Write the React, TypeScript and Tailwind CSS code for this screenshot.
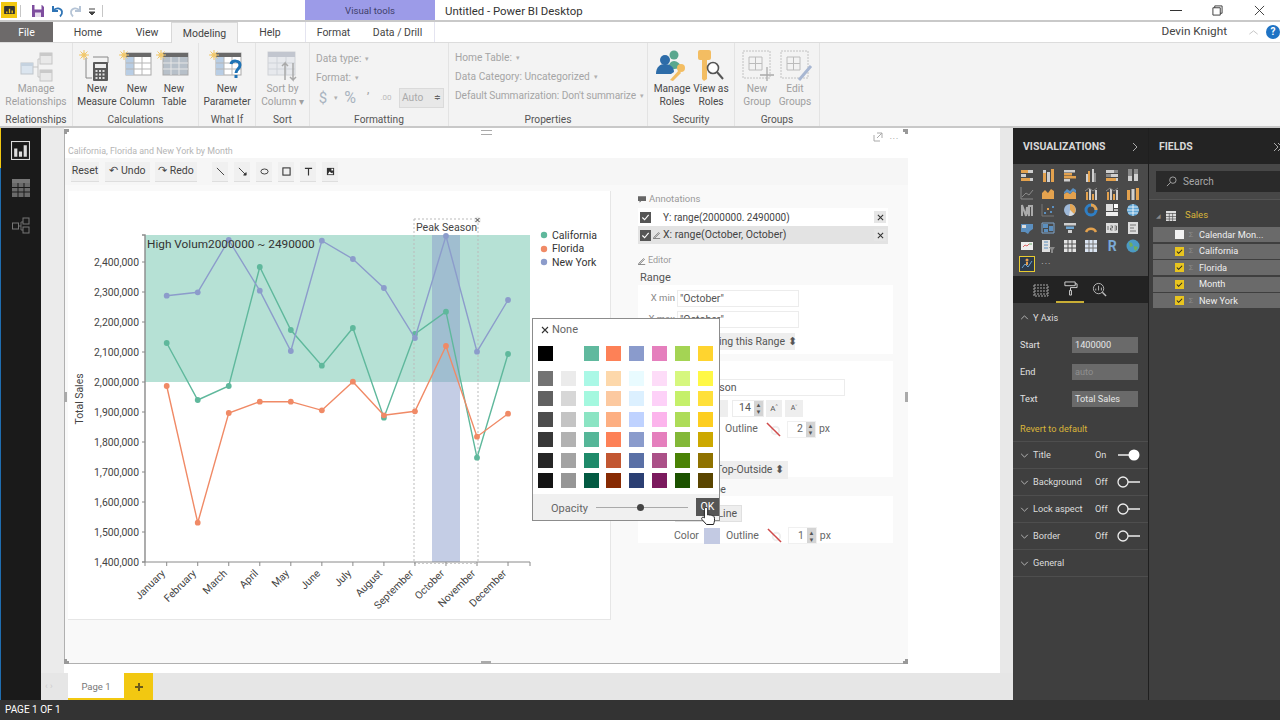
import React from "react";

const F = "font-['Roboto','Noto_Sans',sans-serif]";
const SF = "Roboto,'Noto Sans',sans-serif";

const months = ["January","February","March","April","May","June","July","August","September","October","November","December"];
const mx = (i: number) => 166.7 + i * 31.03;
const ny = [295.7,292.3,240,290.7,351,240.7,259,288,338,236,351.7,300];
const ca = [343,400,386,267,330,365.7,328,417.7,334,311.7,457.7,354];
const fl = [386,522.7,413,401.7,401.7,410.3,381.7,415.3,411.3,346,436.7,413.7];

function Series({ d, c }: { d: number[]; c: string }) {
  return (
    <g>
      <polyline points={d.map((y, i) => `${mx(i)},${y}`).join(" ")} fill="none" stroke={c} strokeWidth="1.4" />
      {d.map((y, i) => <circle key={i} cx={mx(i)} cy={y} r="2.9" fill={c} />)}
    </g>
  );
}

function Chart() {
  const ticks = [];
  for (let i = 0; i <= 10; i++) {
    const v = 1400000 + i * 100000;
    ticks.push({ y: 562 - i * 30, t: v.toLocaleString("en-US") });
  }
  return (
    <svg viewBox="68 191 543 429" className="w-[543px] h-[429px] block">
      <rect x="145" y="235" width="385" height="147" fill="#b6e1d5" />
      <rect x="432" y="235" width="28" height="327" fill="#8a9bcc" fillOpacity="0.5" />
      <line x1="414" y1="219" x2="414" y2="562" stroke="#bbb" strokeDasharray="2 2" />
      <line x1="478" y1="219" x2="478" y2="562" stroke="#bbb" strokeDasharray="2 2" />
      <path d="M414 219H478" stroke="#bbb" strokeDasharray="2 2" />
      <path d="M414 563.5H478" stroke="#ccc" strokeDasharray="2 2" />
      <g stroke="#8a8a8a" strokeWidth="1">
        <path d="M142 235H145V562" fill="none" strokeWidth="1.4" />
        {ticks.map((t) => <line key={t.y} x1="142" x2="145" y1={t.y} y2={t.y} />)}
        <line x1="142" y1="562" x2="530" y2="562" />
        <line x1="530" y1="562" x2="530" y2="566" />
        <line x1="145" y1="562" x2="145" y2="566" />
        {months.map((m, i) => <line key={m} x1={mx(i)} x2={mx(i)} y1="562" y2="566" />)}
      </g>
      <g fontFamily={SF} fontSize="10.4" fill="#444">
        {ticks.map((t) => <text key={t.y} x="139" y={t.y + 3.8} textAnchor="end">{t.t}</text>)}
        {months.map((m, i) => (
          <text key={m} x={mx(i) - 1} y="574" textAnchor="end" transform={`rotate(-45 ${mx(i) - 1} 574)`}>{m}</text>
        ))}
        <text x="0" y="0" textAnchor="middle" transform="translate(83 399) rotate(-90)">Total Sales</text>
      </g>
      <Series d={ca} c="#5fb89c" />
      <Series d={fl} c="#f08a66" />
      <Series d={ny} c="#8c9ccb" />
      <text x="147" y="247.500" fontFamily={SF} fontSize="11.8" fill="#333">High Volum2000000 ~ 2490000</text>
      <text x="416" y="231" fontFamily={SF} fontSize="10.6" fill="#444">Peak Season</text>
      <circle cx="477.5" cy="220" r="3.5" fill="#eee" />
      <path d="M475.5 218l4 4M479.5 218l-4 4" stroke="#444" strokeWidth="1" />
      <g fontFamily={SF} fontSize="10.5" fill="#333">
        <circle cx="544" cy="235" r="3.2" fill="#5fb89c" /><text x="552" y="239">California</text>
        <circle cx="544" cy="249" r="3.2" fill="#f08a66" /><text x="552" y="252">Florida</text>
        <circle cx="544" cy="262" r="3.2" fill="#8c9ccb" /><text x="552" y="266">New York</text>
      </g>
    </svg>
  );
}

/* ---------- ribbon icons ---------- */
const Sun = () => (
  <g>
    <circle cx="5" cy="5" r="2.6" fill="#f4d38a" />
    <path d="M5 0v10M0 5h10M1.5 1.5l7 7M8.5 1.5l-7 7" stroke="#f0c76b" strokeWidth="1" />
  </g>
);
const TableIco = ({ dim = false }: { dim?: boolean }) => (
  <g>
    <rect x="7" y="3" width="25" height="22" fill={dim ? "#b7c0c9" : "#fff"} stroke="#a9a9a9" />
    <rect x="7" y="3" width="25" height="4" fill="#6a6a6a" />
    {!dim && <rect x="7" y="7" width="8" height="18" fill="#b8cde4" />}
    <path d="M15 7v18M23 7v18M7 13h25M7 19h25" stroke={dim ? "#e6e6e6" : "#b5b5b5"} />
  </g>
);
function RIcon({ k }: { k: string }) {
  const c = "w-[36px] h-[32px]";
  if (k === "rel")
    return (
      <svg viewBox="0 0 36 32" className={c}>
        <path d="M15 17h5M20 9v18M20 9h4M20 27h4" stroke="#c5c5c5" fill="none" />
        <rect x="3" y="13" width="12" height="11" fill="#dbe5ef" stroke="#bfc5cb" />
        <rect x="22" y="3" width="12" height="11" fill="#e9e9e9" stroke="#c5c5c5" />
        <rect x="22" y="20" width="12" height="11" fill="#e9e9e9" stroke="#c5c5c5" />
        <rect x="3" y="13" width="12" height="3" fill="#c5d2df" />
        <rect x="22" y="3" width="12" height="3" fill="#c9c9c9" />
        <rect x="22" y="20" width="12" height="3" fill="#c9c9c9" />
      </svg>
    );
  if (k === "measure")
    return (
      <svg viewBox="0 0 36 32" className={c}>
        <path d="M7 8v20h6M14 7h15v6" stroke="#888" fill="none" />
        <rect x="14" y="12" width="15" height="19" rx="1" fill="#5a5a5a" />
        <rect x="16" y="14" width="11" height="4" fill="#eee" />
        <path d="M16.5 21h10M16.5 24.5h10M16.5 28h10" stroke="#ddd" strokeDasharray="2 1.5" strokeWidth="2" />
        <Sun />
      </svg>
    );
  if (k === "column")
    return <svg viewBox="0 0 36 32" className={c}><TableIco /><Sun /></svg>;
  if (k === "table")
    return <svg viewBox="0 0 36 32" className={c}><TableIco dim /><Sun /></svg>;
  if (k === "param")
    return (
      <svg viewBox="0 0 36 32" className={c}>
        <TableIco />
        <Sun />
        <path d="M22 14c1-4 9-4 9 1 0 4-4 4-4 8M27 25v3" fill="none" stroke="#1f73b5" strokeWidth="3" />
      </svg>
    );
  if (k === "sort")
    return (
      <svg viewBox="0 0 36 32" className={c}>
        <rect x="3" y="2" width="27" height="23" fill="#e7e9ed" stroke="#cfd2d6" />
        <rect x="3" y="2" width="27" height="5" fill="#c2c6cf" />
        <path d="M3 13h27M3 19h27M12 7v18M21 7v18" stroke="#cfd3d9" />
        <path d="M20 30V13l-3 3M20 13l3 3M28 13v17l-3-3M28 30l3-3" stroke="#a9a9a9" strokeWidth="1.5" fill="none" />
      </svg>
    );
  if (k === "roles")
    return (
      <svg viewBox="0 0 36 32" className={c}>
        <circle cx="20" cy="5" r="4.5" fill="#5aa78e" />
        <path d="M14 20c0-6 3-9 6-9s7 3 7 7z" fill="#5aa78e" />
        <circle cx="11" cy="10" r="5" fill="#2d6ca8" />
        <path d="M2 24c0-7 4-10 9-10s9 3 9 8l-3 2z" fill="#2d6ca8" />
        <circle cx="27" cy="18" r="4" fill="#f3bd62" />
        <path d="M25 20l-9 10 3 1 8-8" fill="#f3bd62" />
      </svg>
    );
  if (k === "view")
    return (
      <svg viewBox="0 0 36 32" className={c}>
        <rect x="5" y="0" width="13" height="10" rx="2" fill="#f3bd62" />
        <path d="M9 9h5v20l-3 2-2-2z" fill="#f3bd62" />
        <circle cx="20" cy="18" r="5.5" fill="#fff" stroke="#555" strokeWidth="1.6" />
        <path d="M24 22l6 7" stroke="#555" strokeWidth="2" />
      </svg>
    );
  if (k === "group")
    return (
      <svg viewBox="0 0 36 32" className={c}>
        <rect x="4" y="1" width="27" height="27" fill="none" stroke="#c2c2c2" strokeDasharray="2 1" />
        <path d="M10 7h13v13H10zM10 13.5h13M16.5 7v13" fill="none" stroke="#bcbcbc" />
        <path d="M28 17v14M21 25h14" stroke="#aaa" strokeWidth="1.3" />
      </svg>
    );
  return (
    <svg viewBox="0 0 36 32" className={c}>
      <rect x="4" y="1" width="27" height="27" fill="none" stroke="#c2c2c2" strokeDasharray="2 1" />
      <path d="M10 7h13v13H10zM10 13.5h13M16.5 7v13" fill="none" stroke="#bcbcbc" />
      <path d="M22 30l12-14" stroke="#a8b7d2" strokeWidth="3" />
    </svg>
  );
}

function RBtn({ k, a, b, w, dim }: { k: string; a: string; b: string; w: string; dim?: boolean }) {
  return (
    <div className={`${w} flex flex-col items-center text-[10.2px] leading-[13px] ${dim ? "text-[#a0a0a0]" : "text-[#4a4a4a]"}`}>
      <div className="h-[33px] mt-[6px] flex items-center justify-center w-[36px]"><RIcon k={k} /></div>
      <span className="whitespace-nowrap">{a}</span>
      <span className="whitespace-nowrap">{b}</span>
    </div>
  );
}

function RGroup({ w, label, children, pad = "justify-center" }: { w: string; label: string; children: React.ReactNode; pad?: string }) {
  return (
    <div className={`${w} h-full flex flex-col border-r border-[#e3e3e3]`}>
      <div className={`h-[65px] flex ${pad}`}>{children}</div>
      <div className="h-[18px] text-center text-[10.2px] leading-[24px] text-[#555]">{label}</div>
    </div>
  );
}

const Caret = () => <span className="text-[7px] text-[#b0b0b0] ml-[4px] align-top">▾</span>;

function Ribbon() {
  return (
    <div className="h-[85px] flex bg-[#f3f3f3] border-b-[2px] border-[#c8c8c8] shrink-0">
      <RGroup w="w-[73px]" label="Relationships"><RBtn k="rel" a="Manage" b="Relationships" w="w-[70px]" dim /></RGroup>
      <RGroup w="w-[126px]" label="Calculations" pad="justify-start pl-[2px]">
        <RBtn k="measure" a="New" b="Measure" w="w-[44px]" />
        <RBtn k="column" a="New" b="Column" w="w-[36px]" />
        <RBtn k="table" a="New" b="Table" w="w-[38px]" />
      </RGroup>
      <RGroup w="w-[57px]" label="What If"><RBtn k="param" a="New" b="Parameter" w="w-[56px]" /></RGroup>
      <RGroup w="w-[54px]" label="Sort"><RBtn k="sort" a="Sort by" b="Column ▾" w="w-[52px]" dim /></RGroup>
      <RGroup w="w-[139px]" label="Formatting" pad="justify-start">
        <div className="pl-[6px] pt-[9px] text-[10.2px] text-[#a5a5a5] leading-[14px]">
          <div>Data type:<Caret /></div>
          <div className="mt-[5px]">Format:<Caret /></div>
          <div className="mt-[2px] h-[22px] flex items-center">
            <span className="w-[14px] text-center text-[15px] text-[#a9b4c0]">$</span>
            <span className="w-[10px]"><Caret /></span>
            <span className="w-[20px] text-center text-[16px] text-[#a9b4c0]">%</span>
            <span className="w-[16px] text-center text-[13px]">’</span>
            <span className="w-[20px] text-center text-[8px] text-[#bbb]">.00</span>
            <div className="ml-[3px] w-[45px] h-[20px] bg-[#e8e8e8] border border-[#dadada] flex items-center justify-between px-[2px] text-[#aaa]">
              Auto <span className="text-[8px] leading-[8px] text-[#666]">≑</span>
            </div>
          </div>
        </div>
      </RGroup>
      <RGroup w="w-[199px]" label="Properties" pad="justify-start">
        <div className="pl-[6px] pt-[8px] text-[10.2px] text-[#a5a5a5] leading-[14px] whitespace-nowrap">
          <div>Home Table:<Caret /></div>
          <div className="mt-[5px]">Data Category: Uncategorized<Caret /></div>
          <div className="mt-[5px] tracking-[-0.1px]">Default Summarization: Don't summarize<Caret /></div>
        </div>
      </RGroup>
      <RGroup w="w-[87px]" label="Security">
        <RBtn k="roles" a="Manage" b="Roles" w="w-[40px]" />
        <RBtn k="view" a="View as" b="Roles" w="w-[38px]" />
      </RGroup>
      <RGroup w="w-[85px]" label="Groups" pad="justify-start pl-[3px]">
        <RBtn k="group" a="New" b="Group" w="w-[38px]" dim />
        <RBtn k="edit" a="Edit" b="Groups" w="w-[38px]" dim />
      </RGroup>
    </div>
  );
}

function TitleBar() {
  return (
    <div className="h-[22px] flex items-stretch bg-white border-b-[2px] border-[#c9c9c9] shrink-0 relative">
      <div className="w-[16px] h-[16px] mt-[2px] ml-[1px] bg-[#f2c811] flex items-center justify-center">
        <svg viewBox="0 0 12 10" className="w-[11px] h-[9px]"><rect width="12" height="9" rx="1" fill="#333" /><path d="M3 8V6M6 8V3M9 8V5" stroke="#f2c811" strokeWidth="1.5" /></svg>
      </div>
      <div className="w-px h-[12px] bg-[#c6c6c6] mt-[5px] ml-[3px]" />
      <div className="ml-[10px] mt-[4px] flex items-start gap-[5px]">
        <svg viewBox="0 0 14 14" className="w-[14px] h-[14px]"><path d="M1 1h10l2 2v10H1z" fill="#7e4d9e" /><rect x="3.5" y="1" width="7" height="4.5" fill="#fff" /><rect x="4" y="8.5" width="6" height="4.5" fill="#e6dcec" /></svg>
        <svg viewBox="0 0 14 14" className="w-[14px] h-[14px]"><path d="M3 2v5h5" fill="none" stroke="#2f74b5" strokeWidth="2" /><path d="M3.5 6.5C6 3 11 4 12 7.5c.5 2-.5 3.5-2 5" fill="none" stroke="#2f74b5" strokeWidth="1.8" /></svg>
        <svg viewBox="0 0 14 14" className="w-[14px] h-[14px]"><path d="M11 2v5H6" fill="none" stroke="#b5c4d6" strokeWidth="2" /><path d="M10.5 6.5C8 3 3 4 2 7.5c-.5 2 .5 3.5 2 5" fill="none" stroke="#b5c4d6" strokeWidth="1.8" /></svg>
        <svg viewBox="0 0 8 10" className="w-[8px] h-[10px] mt-[3px]"><path d="M1 2h6M1 5l3 3 3-3z" stroke="#444" fill="#444" /></svg>
      </div>
      <div className="w-px h-[12px] bg-[#c6c6c6] mt-[5px] ml-[6px]" />
      <div className="ml-[202px] w-[130px] h-[20px] bg-[#9c9be8] text-[9.6px] leading-[21px] text-center text-[#3f3f6a]">Visual tools</div>
      <div className="ml-[10px] text-[11.4px] leading-[22px] text-[#333]">Untitled - Power BI Desktop</div>
      <div className="ml-auto flex items-center">
        <div className="w-[12px] h-px bg-[#333] mr-[30px]" />
        <svg viewBox="0 0 12 12" className="w-[11px] h-[11px] mr-[31px]"><path d="M3 3V1h8v8H9M1 3h8v8H1z" fill="none" stroke="#333" /></svg>
        <svg viewBox="0 0 12 12" className="w-[11px] h-[11px] mr-[15px]"><path d="M1 1l10 10M11 1L1 11" stroke="#333" /></svg>
      </div>
    </div>
  );
}

function Tabs() {
  const tab = "text-[10.5px] leading-[21px] text-[#444] text-center";
  return (
    <div className="h-[21px] flex bg-white border-b border-[#dcdcdc] shrink-0 items-stretch">
      <div className="w-[53px] bg-[#6d6a6a] text-white text-center text-[10.5px] leading-[21px]">File</div>
      <div className={`${tab} w-[70px]`}>Home</div>
      <div className={`${tab} w-[48px]`}>View</div>
      <div className={`${tab} w-[67px] bg-[#f3f3f3] border-x border-t border-[#d8d8d8] h-[22px]`}>Modeling</div>
      <div className={`${tab} w-[64px]`}>Help</div>
      <div className="w-[3px]" />
      <div className="w-[130px] flex border-x border-[#e4e4f0]">
        <div className={`${tab} w-[55px]`}>Format</div>
        <div className={`${tab} flex-1`}>Data / Drill</div>
      </div>
      <div className="ml-auto flex items-center">
        <span className="text-[11.8px] text-[#444]">Devin Knight</span>
        <svg viewBox="0 0 10 6" className="w-[9px] h-[5px] ml-[22px]"><path d="M0 5l5-4 5 4" fill="none" stroke="#bbb" /></svg>
        <div className="ml-[8px] w-[14px] h-[14px] rounded-full bg-[#1f73c4] text-white text-[10px] leading-[14px] font-bold text-center">?</div>
      </div>
    </div>
  );
}

function LeftNav() {
  return (
    <div className="w-[41px] bg-[#1a1a1a] flex shrink-0 relative">
      <div className="w-[1px] flex flex-col h-full">
        <div className="h-[40px] bg-[#f2c811]" />
        <div className="flex-1 bg-[#1f6db0]" />
      </div>
      <div className="flex-1 flex flex-col items-center pt-[13px] gap-[19px] pr-[1px]">
        <svg viewBox="0 0 18 18" className="w-[19px] h-[19px]"><rect x=".5" y=".5" width="17" height="17" fill="none" stroke="#ddd" /><path d="M3 15V7h3v8zM7.5 15v-5h3v5zM12 15V4h3v11z" fill="#ddd" /></svg>
        <svg viewBox="0 0 18 18" className="w-[18px] h-[18px]"><rect width="18" height="18" fill="#6a6a6a" /><rect width="18" height="4" fill="#777" /><path d="M0 8.500h18M0 13h18M6 4v14M12 4v14" stroke="#1a1a1a" /></svg>
        <svg viewBox="0 0 18 18" className="w-[18px] h-[18px] mt-[1px]"><path d="M6 9h3V5h2M9 9v4h2" stroke="#6a6a6a" fill="none" /><rect x=".5" y="6" width="6" height="6" fill="none" stroke="#777" /><rect x="11" y="1" width="6" height="6" fill="none" stroke="#777" /><rect x="11" y="10" width="6" height="6" fill="none" stroke="#777" /></svg>
      </div>
    </div>
  );
}

/* ---------- annotation panel ---------- */
const Check = () => (
  <div className="w-[11px] h-[11px] bg-[#555] flex items-center justify-center shrink-0">
    <svg viewBox="0 0 10 10" className="w-[9px] h-[9px]"><path d="M1.500 5l2.500 2.500L8.500 2" fill="none" stroke="#fff" strokeWidth="1.3" /></svg>
  </div>
);
const Pen = () => (
  <svg viewBox="0 0 10 10" className="w-[8px] h-[8px] shrink-0"><path d="M1 8l6-6 1 1-6 6zM0 9.500h9" fill="none" stroke="#666" /></svg>
);
const Stepper = () => (
  <div className="w-[9px] h-[15px] bg-[#d4d4d4] text-[6px] leading-[7px] text-[#555] flex flex-col items-center justify-center">
    <span>▲</span><span>▼</span>
  </div>
);
const Slash = () => (
  <svg viewBox="0 0 16 16" className="w-[15px] h-[15px]"><circle cx="10" cy="9" r="4" fill="none" stroke="#eee" strokeWidth="2" /><path d="M1 1l14 14" stroke="#cf4a4a" strokeWidth="1.6" /></svg>
);
const XBtn = () => (
  <div className="w-[12px] h-[12px] bg-[#e6e6e6] flex items-center justify-center">
    <svg viewBox="0 0 8 8" className="w-[7px] h-[7px]"><path d="M1 1l6 6M7 1L1 7" stroke="#333" strokeWidth="1.2" /></svg>
  </div>
);

function AnnoPanel() {
  const rowBase = "h-[18px] flex items-center pl-[2px] pr-[2px]";
  return (
    <div className="w-[255px] text-[10.5px] text-[#555] flex flex-col">
      <div className="h-[16px] pt-[3px] flex items-center gap-[3px] text-[9.5px] text-[#999]">
        <svg viewBox="0 0 10 8" className="w-[8px] h-[7px]"><path d="M0 0h10v6H4L2 8V6H0z" fill="#666" /></svg>Annotations
      </div>
      <div className="mt-[2px] w-[250px]">
        <div className={`${rowBase} bg-white`}>
          <Check /><span className="ml-[12px] text-[10px] text-[#444] whitespace-nowrap">Y: range(2000000. 2490000)</span>
          <div className="ml-auto"><XBtn /></div>
        </div>
        <div className={`${rowBase} bg-[#e3e3e3]`}>
          <Check /><span className="ml-[2px]"><Pen /></span><span className="ml-[2px] text-[#444] whitespace-nowrap">X: range(October, October)</span>
          <div className="ml-auto"><XBtn /></div>
        </div>
      </div>
      <div className="mt-[10px] h-[14px] flex items-center gap-[2px] text-[9px] text-[#999]"><Pen />Editor</div>
      <div className="mt-[2px] h-[15px] text-[11px] leading-[15px] pl-[2px]">Range</div>
      <div className="bg-white h-[69px] pt-[5px] pl-[10px]">
        <div className="flex items-center h-[17px]">
          <span className="w-[27px] text-[9.5px] text-right text-[#888]">X min</span>
          <div className="ml-[2px] w-[122px] h-[17px] border border-[#ececec] pl-[2px] text-[10.5px] leading-[15px]">"October"</div>
        </div>
        <div className="flex items-center h-[17px] mt-[4px]">
          <span className="w-[27px] text-[9.5px] text-right text-[#888]">X max</span>
          <div className="ml-[2px] w-[122px] h-[17px] border border-[#ececec] pl-[2px] text-[10.5px] leading-[15px]">"October"</div>
        </div>
        <div className="mt-[5px] ml-[29px] w-[118px] h-[17px] bg-[#eeeeee] text-[10.5px] leading-[17px] text-right pr-[4px] whitespace-nowrap">Highlighting this Range ⬍</div>
      </div>
      <div className="mt-[7px] bg-white h-[116px] pt-[18px] pl-[35px]">
        <div className="w-[172px] h-[17px] border border-[#ececec] text-[10.5px] leading-[15px] pl-[2px]">Peak Season</div>
        <div className="mt-[3px] h-[18px] flex items-center">
          <div className="w-[55px] h-[17px] bg-[#eee]" />
          <div className="ml-[4px] w-[32px] h-[17px] border border-[#ececec] flex items-center justify-between pl-[6px] text-[10.5px]">14<Stepper /></div>
          <div className="ml-[2px] w-[16px] h-[17px] bg-[#eee] text-[8px] leading-[17px] text-center">A˄</div>
          <div className="ml-[3px] w-[18px] h-[17px] bg-[#eee] text-[7px] leading-[17px] text-center">A˅</div>
        </div>
        <div className="mt-[3px] h-[18px] flex items-center text-[10.5px] text-[#666]">
          <span className="ml-[52px]">Outline</span>
          <span className="ml-[8px]"><Slash /></span>
          <div className="ml-[6px] w-[29px] h-[17px] border border-[#f0f0f0] flex items-center justify-end gap-[3px]">2<Stepper /></div>
          <span className="ml-[3px]">px</span>
        </div>
        <div className="mt-[23px] ml-[39px] w-[76px] h-[18px] bg-[#eee] text-[10.5px] leading-[18px] text-center whitespace-nowrap">Top-Outside ⬍</div>
      </div>
      <div className="mt-[7px] h-[12px] text-[10px] leading-[12px] pl-[60px]">Shape</div>
      <div className="bg-white h-[47px] pl-[36px]">
        <div className="h-[9px]" />
        <div className="ml-[1px] w-[67px] h-[17px] bg-[#eee] border border-[#e0e0e0] text-[10.5px] leading-[15px] text-right pr-[4px]">Line</div>
        <div className="mt-[5px] h-[17px] flex items-center text-[10.5px] text-[#666]">
          <span>Color</span>
          <div className="ml-[5px] w-[16px] h-[16px] bg-[#c3cae3]" />
          <span className="ml-[6px]">Outline</span>
          <span className="ml-[8px]"><Slash /></span>
          <div className="ml-[6px] w-[29px] h-[17px] border border-[#f0f0f0] flex items-center justify-end gap-[3px]">1<Stepper /></div>
          <span className="ml-[3px]">px</span>
        </div>
      </div>
    </div>
  );
}

/* ---------- color picker ---------- */
const top = ["#000000","#ffffff","#60b99e","#fd8157","#8a9bcc","#e57fbd","#a4d454","#ffd42f"];
const rows = [
  ["#737373","#ebebeb","#aaf8e6","#fdd8ab","#e9fbff","#fddcf8","#d6f77e","#fff846"],
  ["#616161","#d7d7d7","#a4f8df","#fcc9a0","#dcf0ff","#fdd1f8","#c5f06a","#ffe03a"],
  ["#4d4d4d","#c4c4c4","#8be4c3","#fdaf82","#bfd2ff","#fcb4ec","#addc58","#fdce20"],
  ["#383838","#b2b2b2","#55b698","#fd8157","#8a9bcc","#e57fbd","#83b838","#cca800"],
  ["#262626","#a3a3a3","#1f8a6a","#c25732","#5a70a6","#ab5088","#4a8205","#8f7200"],
  ["#141414","#969696","#035a42","#872a03","#2b3f73","#7b1a5e","#1c5200","#5a4500"],
];

function Picker() {
  const Row = ({ r, cls }: { r: string[]; cls: string }) => (
    <div className={`flex gap-[7.800px] ${cls}`}>
      {r.map((c, i) => <div key={i} className="w-[15px] h-[15px]" style={{ background: c }} />)}
    </div>
  );
  return (
    <div className="absolute left-[532px] top-[318px] w-[188px] h-[203px] bg-white border border-[#8c8c8c] flex flex-col z-10">
      <div className="h-[21px] pt-[1px] flex items-center pl-[8px] gap-[3px] text-[11px] text-[#666]">
        <svg viewBox="0 0 8 8" className="w-[8px] h-[8px]"><path d="M1 1l6 6M7 1L1 7" stroke="#333" strokeWidth="1.100" /></svg>None
      </div>
      <div className="pl-[5px] flex flex-col flex-1">
        <Row r={top} cls="mt-[5.500px]" />
        <Row r={rows[0]} cls="mt-[10px]" />
        {rows.slice(1).map((r, i) => <Row key={i} r={r} cls="mt-[5.500px]" />)}
      </div>
      <div className="h-[26px] bg-[#f0f0f0] flex items-center relative">
        <span className="ml-[18px] text-[11px] text-[#666] mt-[4px]">Opacity</span>
        <div className="ml-[8px] w-[92px] h-px bg-[#aaa] relative">
          <div className="absolute left-[41px] top-[-3px] w-[7px] h-[7px] rounded-full bg-[#444]" />
        </div>
        <div className="ml-[8px] w-[23px] h-[18px] bg-[#555] text-white text-[10.5px] leading-[18px] text-center">OK</div>
      </div>
    </div>
  );
}

const Cursor = () => (
  <svg viewBox="0 0 18 22" className="absolute left-[700px] top-[506px] w-[18px] h-[22px] z-20">
    <path d="M6 1.500c1 0 1.700.6 1.700 1.600V9c.8-.4 1.700-.3 2.200.3.800-.4 1.700-.2 2.200.5.900-.3 1.800.2 2.100 1 .6 2.500.4 5-.7 7.700H6.500L2 13.500c-.7-1-.3-2 .7-2.200.6-.1 1.200.1 1.700.6V3.100c0-1 .7-1.600 1.600-1.600z" fill="#fff" stroke="#222" strokeWidth="1" />
  </svg>
);

/* ---------- canvas ---------- */
function Toolbar() {
  const b = "h-[20px] bg-[#f0f0f0] border-b border-[#dedede] flex items-center justify-center text-[10.5px] text-[#444]";
  const icons = [
    <path d="M1 1l8 8" stroke="#333" />,
    <path d="M1 1l8 8M6 9h3V6" stroke="#333" fill="#333" />,
    <ellipse cx="5" cy="5" rx="4" ry="2.800" fill="none" stroke="#333" />,
    <rect x="1" y="1" width="8" height="8" fill="none" stroke="#333" strokeWidth="1.2" />,
    <path d="M1 1.500h8M5 1.500V9.500" stroke="#333" strokeWidth="1.3" fill="none" />,
    <g><rect x="1" y="1" width="8" height="8" fill="#333" /><path d="M2 8l2-3 2 2 1-1 1 2zM6 2h2v2H6z" fill="#fff" /></g>,
  ];
  return (
    <div className="h-[27px] bg-[#f6f6f6] flex items-center pl-[6px]">
      <div className={`${b} w-[28px]`}>Reset</div>
      <div className={`${b} w-[45px] ml-[6px] gap-[3px]`}>↶ Undo</div>
      <div className={`${b} w-[42px] ml-[5px] gap-[3px]`}>↷ Redo</div>
      <div className="ml-[15px] flex gap-[6px]">
        {icons.map((ic, i) => (
          <div key={i} className={`${b} w-[16px]`}><svg viewBox="0 0 10 10" className="w-[9px] h-[9px]">{ic}</svg></div>
        ))}
      </div>
    </div>
  );
}

function Canvas() {
  return (
    <div className="w-[972px] shrink-0 flex flex-col bg-white relative">
      <div className="flex-1 flex">
        <div className="w-[23px] bg-[#ebebeb]" />
        <div className="w-[844px] h-[534px] mt-[2px] bg-[#f9f9f9] border-l border-b border-[#b0b0b0] flex flex-col relative">
          <div className="h-[14px] bg-white flex items-center justify-end pr-[9px] gap-[7px] shrink-0">
            <svg viewBox="0 0 10 10" className="w-[10px] h-[10px]"><path d="M1 3v6h6M4 1h5v5M9 1L4 6" fill="none" stroke="#aaa" /></svg>
            <span className="text-[8px] leading-[8px] text-[#888] tracking-[1px]">...</span>
          </div>
          <div className="h-[14px] bg-white text-[8.9px] leading-[14px] text-[#b5b5b5] pl-[3px] shrink-0">California, Florida and New York by Month</div>
          <Toolbar />
          <div className="flex mt-[6px] pl-[3px]">
            <div className="w-[543px] h-[429px] bg-white border-r-[1px] border-b-[1px] border-[#e6e6e6] shrink-0 overflow-hidden"><Chart /></div>
            <div className="ml-[27px] -mt-[1px]"><AnnoPanel /></div>
          </div>
          {/* handles */}
          <div className="absolute -left-px -top-px w-[5px] h-[5px] border-l-[3px] border-t-[3px] border-[#999]" />
          <div className="absolute right-0 -top-px w-[5px] h-[5px] border-r-[3px] border-t-[3px] border-[#999]" />
          <div className="absolute -left-px -bottom-px w-[5px] h-[5px] border-l-[3px] border-b-[3px] border-[#999]" />
          <div className="absolute right-0 -bottom-px w-[5px] h-[5px] border-r-[3px] border-b-[3px] border-[#999]" />
          <div className="absolute left-[416px] top-[0px] w-[11px] h-[5px] border-y border-[#aaa]" />
          <div className="absolute left-[416px] -bottom-[1px] w-[10px] h-[3px] bg-[#aaa]" />
          <div className="absolute -left-[1px] top-[262px] w-[3px] h-[10px] bg-[#aaa]" />
          <div className="absolute right-0 top-[262px] w-[3px] h-[10px] bg-[#aaa]" />
        </div>
        <div className="flex-1 bg-white" />
        <div className="w-[13px] bg-[#e8e8e8]" />
      </div>
      <div className="h-[27px] bg-[#e6e6e6] flex shrink-0 items-stretch">
        <div className="w-[27px] text-[9px] leading-[27px] text-[#ccc] pl-[4px]">‹ ›</div>
        <div className="w-[56px] bg-white border-b-[2px] border-[#f2c811] text-[9.5px] leading-[27px] text-[#777] text-center">Page 1</div>
        <div className="w-[29px] bg-[#f2c811] flex items-center justify-center">
          <svg viewBox="0 0 8 8" className="w-[8px] h-[8px]"><path d="M4 0v8M0 4h8" stroke="#6b5a1a" strokeWidth="2" /></svg>
        </div>
      </div>
    </div>
  );
}

/* ---------- viz gallery ---------- */
const O = "#e4a24e", W = "#cfcfcf", B = "#5b8fbf", K = "#8a8a8a";
type R = [number, number, number, number, string];
const rectIcons: R[][] = [
  [[1,2,7,3,O],[8,2,5,3,W],[1,6,5,3,W],[1,10,9,3,O],[10,10,3,3,W]],
  [[2,5,3,9,O],[2,2,3,3,W],[6,4,3,10,W],[10,1,3,13,O]],
  [[1,2,11,2.500,W],[1,5,8,2.500,O],[1,8,12,2.500,O],[1,11,6,2.500,W]],
  [[2,6,2,8,W],[4,3,2,11,O],[8,1,2,13,W],[10,5,2,9,K]],
  [[1,2,8,3,W],[9,2,4,3,K],[1,6,5,3,K],[6,6,7,3,W],[1,10,10,3,O],[11,10,2,3,W]],
  [[2,1,4,7,K],[2,8,4,5,W],[8,1,4,5,K],[8,6,4,7,W]],
];
function VizIcon({ i }: { i: number }) {
  let c: React.ReactNode = null;
  if (i < 6) c = rectIcons[i].map((r, j) => <rect key={j} x={r[0]} y={r[1]} width={r[2]} height={r[3]} fill={r[4]} />);
  else if (i === 6) c = <path d="M1 1v12h12M2 11l4-4 3 2 4-5" fill="none" stroke={K} />;
  else if (i === 7) c = <path d="M1 13V7l3-3 3 3 3-4 3 2v8z" fill={O} />;
  else if (i === 8) c = <g><path d="M1 13V8l3-2 3 2 3-3 3 2v6z" fill={O} /><path d="M1 6l3-3 3 2 3-3 3 2v3l-3-2-3 3-3-2-3 2z" fill={B} /></g>;
  else if (i === 9 || i === 10) c = <g><rect x="2" y="6" width="2" height="8" fill={O} /><rect x="5" y="3" width="2" height="11" fill={W} /><rect x="8" y="8" width="2" height="6" fill={O} /><rect x="11" y="4" width="2" height="10" fill={W} /><path d="M1 5l4-3 4 3 4-3" fill="none" stroke="#888" /></g>;
  else if (i === 11) c = <g><rect x="1" y="4" width="3" height="10" fill={O} /><rect x="5.500" y="3" width="3" height="11" fill={W} /><rect x="10" y="2" width="3" height="12" fill={O} /></g>;
  else if (i === 12) c = <path d="M2 13V2l4 11 1-9 2 9V3h3v10" fill="none" stroke="#aaa" strokeWidth="2" />;
  else if (i === 13) c = <g fill={B}><rect x="3" y="9" width="2" height="2" /><rect x="6" y="5" width="2" height="2" fill={O} /><rect x="9" y="8" width="2" height="2" /><rect x="11" y="3" width="2" height="2" /><path d="M1 1v12h12" stroke="#777" fill="none" /></g>;
  else if (i === 14) c = <g><circle cx="7" cy="7" r="6" fill="#9fb9d8" /><path d="M7 7V1a6 6 0 0 1 4 10z" fill="#e3a655" /><path d="M7 7l4 4a6 6 0 0 1-5 2z" fill="#ddd" /></g>;
  else if (i === 15) c = <g fill="none" strokeWidth="3"><circle cx="7" cy="7" r="5" stroke="#2f7ec4" /><path d="M7 2a5 5 0 0 1 5 5" stroke={O} /></g>;
  else if (i === 16) c = <g><rect x="1" y="1" width="7" height="7" fill="#ddd" /><rect x="9" y="1" width="4" height="4" fill="#fff" /><rect x="9" y="6" width="4" height="2" fill="#bbb" /><rect x="1" y="9" width="12" height="4" fill="#eee" /></g>;
  else if (i === 17) c = <g><circle cx="7" cy="7" r="6" fill="#5ca4d6" /><path d="M1 7h12M7 1v12M2 4h10M2 10h10" stroke="#fff" strokeWidth=".8" /></g>;
  else if (i === 18) c = <g><path d="M1 3h12v5l-3 2-2 3-3-2H1z" fill="#5b8fbf" /><rect x="2" y="4" width="4" height="3" fill="#ddd" /></g>;
  else if (i === 19) c = <g><path d="M1 2h12v10H1z" fill="none" stroke="#7fa5cc" /><path d="M2 3h5v4H2zM8 5h4v5H8zM3 8h4v3H3z" fill="#5b8fbf" /></g>;
  else if (i === 20) c = <g fill="#cfcfcf"><rect x="1" y="2" width="12" height="2.500" /><path d="M3 5.500h8v2.500H3z" fill="#6ea5d1" /><path d="M5 9h4v3H5z" /></g>;
  else if (i === 21) c = <path d="M2 11a5.500 5.500 0 0 1 10 0" fill="none" stroke={O} strokeWidth="2.500" />;
  else if (i === 22) c = <g><rect x="1" y="2" width="12" height="10" fill="#ddd" /><path d="M3 5v4M5.500 5h2v2h-2v2h2M9.500 5h2v4h-2M9.500 7h2" stroke="#555" fill="none" strokeWidth=".8" /></g>;
  else if (i === 23) c = <g><rect x="2" y="1" width="10" height="12" fill="#ddd" /><path d="M4 4h6M4 7h4M4 10h6" stroke="#777" /></g>;
  else if (i === 24) c = <g><rect x="1" y="3" width="12" height="8" fill="#eee" /><path d="M3 8l2-2 2 1 2-2" stroke="#d66" fill="none" /><path d="M9 5h3" stroke="#6a6" /></g>;
  else if (i === 25) c = <g><rect x="1" y="1" width="8" height="12" fill="#dfdfdf" /><path d="M3 3h4M3 6h4M3 9h4" stroke="#5b8fbf" /><path d="M8 8h6l-2 3v3h-2v-3z" fill="#888" /></g>;
  else if (i === 26) c = <g><rect x="1" y="1" width="12" height="12" fill="#e4e4e4" /><path d="M5 1v12M9 1v12M1 5h12M1 9h12" stroke="#555" /></g>;
  else if (i === 27) c = <g><rect x="1" y="1" width="12" height="12" fill="#dbe5f3" /><path d="M5 1v12M9 1v12M1 5h12M1 9h12" stroke="#777" /></g>;
  else if (i === 28) return <span className="w-[14px] h-[14px] text-[14px] leading-[14px] font-bold text-center text-[#7aa9d6]">R</span>;
  else if (i === 29) c = <g><circle cx="7" cy="7" r="6.500" fill="#4b9ac4" /><path d="M3 3l3 1 1 3-3 1zM8 7l4 1-2 4-2-2z" fill="#6fae5d" /></g>;
  return <svg viewBox="0 0 14 14" className="w-[14px] h-[14px]">{c}</svg>;
}

function VizPanel() {
  return (
    <div className="w-[136px] flex flex-col bg-[#3f3f3f] border-r border-[#1f1f1f] shrink-0">
      <div className="h-[36px] pt-[1px] bg-[#232323] flex items-center justify-between pl-[10px] pr-[10px] shrink-0">
        <span className="text-[10.5px] font-bold text-[#d8d8d8]">VISUALIZATIONS</span>
        <svg viewBox="0 0 6 10" className="w-[6px] h-[10px]"><path d="M1 1l4 4-4 4" fill="none" stroke="#aaa" /></svg>
      </div>
      <div className="h-[112px] bg-[#4a4a4a] pt-[2px] pl-[7px] shrink-0">
        <div className="grid grid-cols-[repeat(6,21.300px)] auto-rows-[17.800px] items-center">
          {Array.from({ length: 30 }).map((_, i) => <div key={i} className="flex"><VizIcon i={i} /></div>)}
          <div className="-ml-[1px] w-[16px] h-[16px] border-[1.500px] border-[#e8cb30] bg-[#2d3a4a] flex">
            <svg viewBox="0 0 14 14" className="w-full h-full"><path d="M2 11l3-4 3 3 4-6" fill="none" stroke="#6ea5d1" /><circle cx="7" cy="3" r="1.500" fill="#e8a04c" /><rect x="6" y="5" width="2" height="3" fill="#e8a04c" /></svg>
          </div>
          <div className="text-[9px] leading-[9px] text-[#ccc] tracking-[1px] pb-[4px]">...</div>
        </div>
      </div>
      <div className="h-[27px] bg-[#232323] flex shrink-0">
        <div className="w-[42px] flex justify-end items-center pr-[6px]">
          <svg viewBox="0 0 16 16" className="w-[16px] h-[16px]"><path d="M1 3h14v11H1zM1 6h14M1 9h14M1 12h14" fill="none" stroke="#aaa" strokeDasharray="2 1" /></svg>
        </div>
        <div className="w-[28px] flex items-center justify-center border-b-[2px] border-[#c9ae35] ml-[1px]">
          <svg viewBox="0 0 16 16" className="w-[15px] h-[15px]"><path d="M2 1h11v4H2zM13 3h2v4H8v3M7 10h2v5H7z" fill="none" stroke="#d5d5d5" /></svg>
        </div>
        <div className="w-[31px] flex items-center justify-center">
          <svg viewBox="0 0 16 16" className="w-[15px] h-[15px]"><circle cx="7" cy="7" r="5.500" fill="none" stroke="#bbb" /><path d="M11 11l4 4" stroke="#bbb" strokeWidth="1.500" /><path d="M4 9V7M7 9V4M10 9V6" stroke="#bbb" /></svg>
        </div>
      </div>
      <FormatPane />
    </div>
  );
}

const Chev = ({ up }: { up?: boolean }) => (
  <svg viewBox="0 0 10 6" className="w-[9px] h-[5px] shrink-0"><path d={up ? "M1 5l4-4 4 4" : "M1 1l4 4 4-4"} fill="none" stroke="#c9c9c9" /></svg>
);

function FormatPane() {
  const Input = ({ l, v, dim }: { l: string; v: string; dim?: boolean }) => (
    <div className="h-[27px] flex items-center pl-[7px] pr-[10px] justify-between text-[9.2px] text-[#e0e0e0]">
      <span>{l}</span>
      <div className={`w-[66px] h-[16px] bg-[#6a6a6a] pl-[3px] leading-[16px] ${dim ? "text-[#8f8f8f]" : "text-[#e6e6e6]"}`}>{v}</div>
    </div>
  );
  const Sec = ({ l, s }: { l: string; s?: "On" | "Off" }) => (
    <div className="h-[27px] border-t border-[#4e4e4e] flex items-center pl-[7px] text-[9.2px] text-[#dcdcdc]">
      <Chev /><span className="ml-[4px]">{l}</span>
      {s && <span className="absolute left-[82px]">{s}</span>}
      {s === "On" && (
        <svg viewBox="0 0 24 12" className="absolute left-[104px] w-[24px] h-[12px]"><path d="M1 6h16" stroke="#eee" strokeWidth="1.500" /><circle cx="17" cy="6" r="5.500" fill="#fff" /></svg>
      )}
      {s === "Off" && (
        <svg viewBox="0 0 24 12" className="absolute left-[104px] w-[24px] h-[12px]"><path d="M11 6h12" stroke="#eee" strokeWidth="1.500" /><circle cx="6" cy="6" r="5" fill="none" stroke="#eee" strokeWidth="1.300" /></svg>
      )}
    </div>
  );
  return (
    <div className="flex-1 flex flex-col relative pt-[1px]">
      <div className="h-[27px] flex items-center pl-[7px] text-[9.2px] text-[#dcdcdc]"><Chev up /><span className="ml-[4px]">Y Axis</span></div>
      <Input l="Start" v="1400000" />
      <Input l="End" v="auto" dim />
      <Input l="Text" v="Total Sales" />
      <div className="h-[29px] pt-[4px] flex items-center pl-[7px] text-[9.2px] text-[#d9b53a]">Revert to default</div>
      <Sec l="Title" s="On" />
      <Sec l="Background" s="Off" />
      <Sec l="Lock aspect" s="Off" />
      <Sec l="Border" s="Off" />
      <Sec l="General" />
      <div className="border-t border-[#4e4e4e]" />
    </div>
  );
}

function FieldsPanel() {
  const Row = ({ l, on, sum = true }: { l: string; on: boolean; sum?: boolean }) => (
    <div className="h-[15px] mb-[1.500px] bg-[#6a6a6a] flex items-center pl-[22px] text-[9.2px] text-[#efefef] whitespace-nowrap">
      {on ? (
        <div className="w-[9px] h-[9px] bg-[#e8c41f] flex items-center justify-center shrink-0">
          <svg viewBox="0 0 8 8" className="w-[7px] h-[7px]"><path d="M1 4l2 2 4-4" fill="none" stroke="#222" strokeWidth="1.200" /></svg>
        </div>
      ) : <div className="w-[9px] h-[9px] bg-[#f2f2f2] shrink-0" />}
      <span className="w-[14px] text-center text-[8px] text-[#8a8a8a]">{sum ? "Σ" : ""}</span>
      <span className="ml-[1px]">{l}</span>
    </div>
  );
  return (
    <div className="w-[131px] shrink-0 flex flex-col bg-[#3f3f3f] overflow-hidden">
      <div className="h-[36px] pt-[1px] bg-[#232323] flex items-center justify-between pl-[10px] shrink-0">
        <span className="text-[10.5px] font-bold text-[#d8d8d8]">FIELDS</span>
        <svg viewBox="0 0 10 10" className="w-[10px] h-[10px] mr-[-3px]"><path d="M1 1l4 4-4 4M5 1l4 4-4 4" fill="none" stroke="#aaa" /></svg>
      </div>
      <div className="h-[36px] bg-[#474747] pt-[7px] pl-[7px] border-b border-[#555] shrink-0">
        <div className="h-[21px] bg-[#2a2a2a] flex items-center pl-[10px] gap-[6px] text-[10px] text-[#a8a8a8]">
          <svg viewBox="0 0 12 12" className="w-[11px] h-[11px]"><circle cx="7.500" cy="4.500" r="3.500" fill="none" stroke="#aaa" /><path d="M5 7l-4 4" stroke="#aaa" /></svg>Search
        </div>
      </div>
      <div className="h-[19px] flex items-center pl-[7px] mt-[6px] shrink-0">
        <span className="text-[6px] text-[#888]">◢</span>
        <svg viewBox="0 0 10 10" className="w-[10px] h-[10px] ml-[5px]"><rect width="10" height="10" fill="#ddd" /><path d="M0 2.500h10M0 5.500h10M0 8h10M3.300 2v8M6.600 2v8" stroke="#555" strokeWidth=".7" /></svg>
        <span className="ml-[9px] text-[9.5px] text-[#d9b53a]">Sales</span>
      </div>
      <div className="pl-[4px] mt-[2px]">
        <Row l="Calendar Mon..." on={false} />
        <Row l="California" on />
        <Row l="Florida" on />
        <Row l="Month" on sum={false} />
        <Row l="New York" on />
      </div>
    </div>
  );
}

export default function App() {
  return (
    <div className={`w-[1280px] h-[720px] flex flex-col overflow-hidden relative bg-white ${F}`}>
      <TitleBar />
      <Tabs />
      <Ribbon />
      <div className="flex-1 flex min-h-0">
        <LeftNav />
        <Canvas />
        <VizPanel />
        <FieldsPanel />
      </div>
      <div className="h-[20px] bg-[#333333] text-[10px] leading-[20px] text-white pl-[5px] shrink-0">PAGE 1 OF 1</div>
      <Picker />
      <Cursor />
    </div>
  );
}
